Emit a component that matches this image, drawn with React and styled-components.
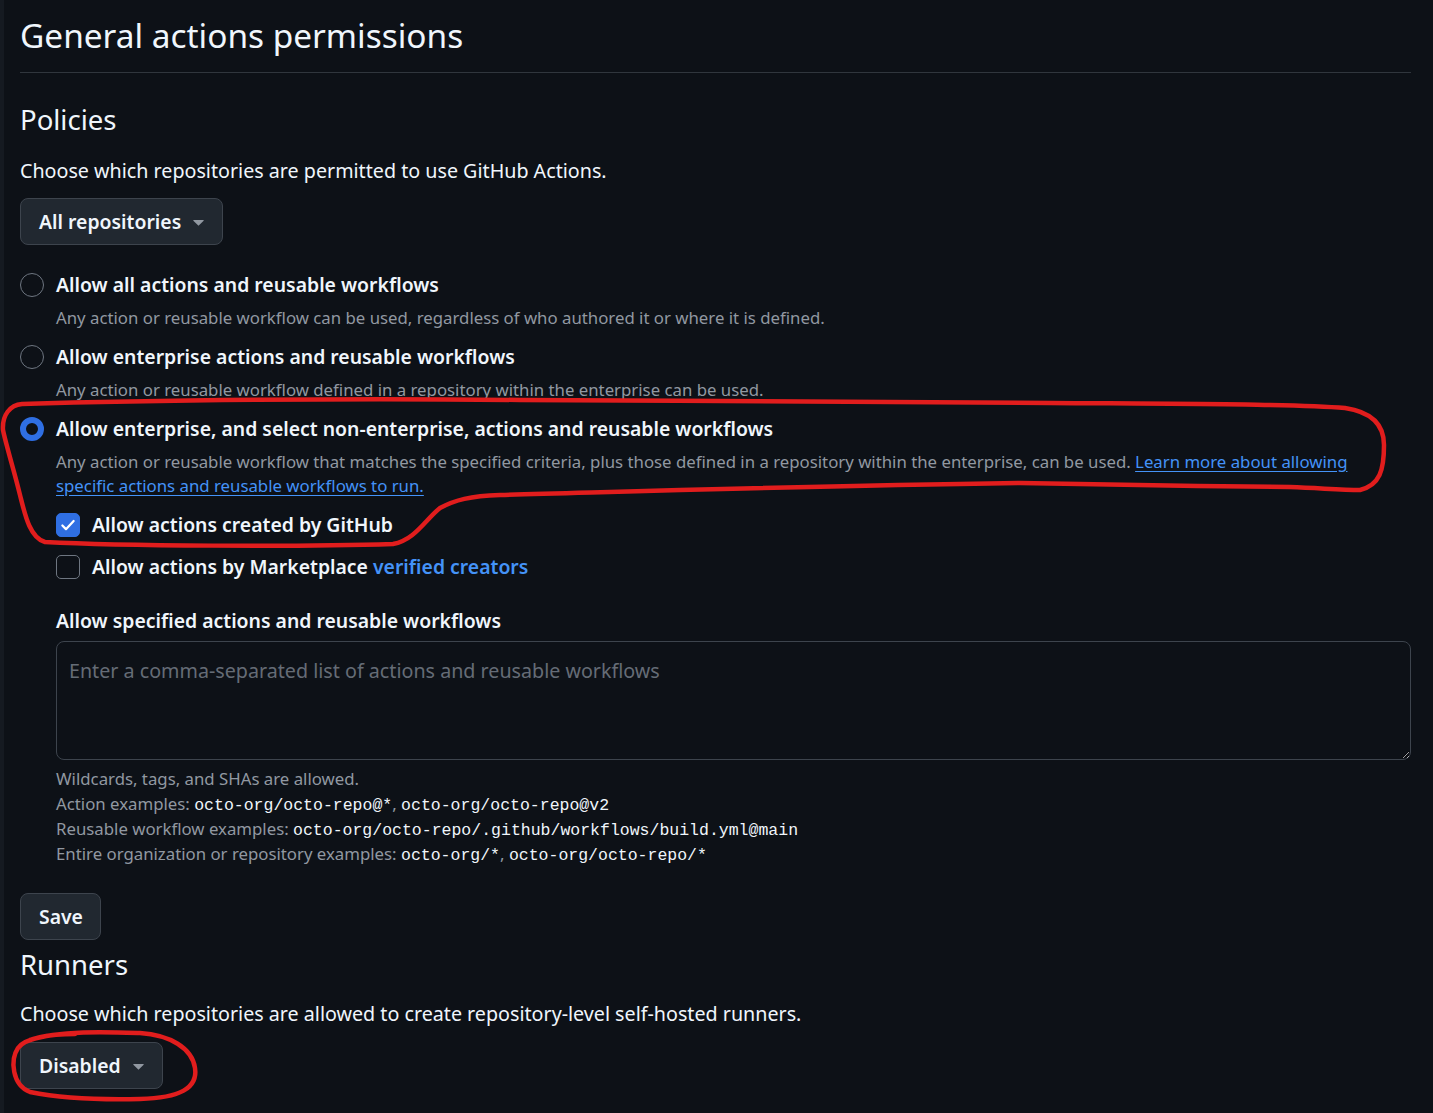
import React from 'react'
import styled, { createGlobalStyle } from 'styled-components'

const GlobalStyle = createGlobalStyle`
  html, body { margin: 0; padding: 0; background: #0d1117; }
  body {
    font-family: "Noto Sans", "Liberation Sans", sans-serif;
    color: #f0f6fc;
  }
  * { box-sizing: border-box; }
`

const Wrapper = styled.div`
  position: relative;
  width: 1433px;
  height: 1113px;
  overflow: hidden;
`

const Page = styled.div`
  width: 1433px;
  height: 1113px;
  border-left: 4px solid #151a21;
  padding: 10px 22px 0 16px;
`

const Header = styled.div`
  border-bottom: 1px solid #30363d;
  padding-bottom: 11px;
`

const Title = styled.h2`
  margin: 0;
  font-size: 33.4px;
  line-height: 51px;
  font-weight: 400;
`

const SectionTitle = styled.h3`
  margin: ${p => p.$top}px 0 0;
  font-size: 27.5px;
  line-height: 42px;
  font-weight: 400;
`

const Lead = styled.p`
  margin: ${p => p.$top}px 0 0;
  font-size: 19.7px;
  line-height: 30px;
`

const Button = styled.button`
  display: flex;
  align-items: center;
  gap: 6px;
  margin-top: ${p => p.$top}px;
  height: 47px;
  padding: 0 ${p => (p.$caret ? 12 : 17)}px 0 18px;
  background: #212830;
  border: 1px solid #3d444d;
  border-radius: 8px;
  color: #f0f6fc;
  font-family: inherit;
  font-size: 19.4px;
  font-weight: 600;
`

const Options = styled.div`
  margin-top: 25px;
  display: flex;
  flex-direction: column;
  gap: 12px;
`

const Option = styled.div`
  display: grid;
  grid-template-columns: 24px 1fr;
  column-gap: 12px;
  row-gap: 6px;
  align-items: center;
`

const Radio = styled.span`
  width: 24px;
  height: 24px;
  border-radius: 50%;
  border: ${p => (p.$checked ? '6.5px solid #2f6fe3' : '1.5px solid #6e7681')};
  background: #0d1117;
`

const OptionLabel = styled.div`
  font-size: 19.4px;
  line-height: 30px;
  font-weight: 600;
`

const Note = styled.div`
  grid-column: 2;
  padding-right: 10px;
  font-size: 16.8px;
  line-height: 24px;
  color: #9198a1;
`

const Link = styled.a`
  color: #4493f8;
  text-decoration: ${p => (p.$underline ? 'underline' : 'none')};
  text-underline-offset: 3px;
`

const Nested = styled.div`
  grid-column: 2;
  margin-top: 6px;
  display: flex;
  flex-direction: column;
  gap: 12px;
`

const CheckRow = styled.div`
  display: flex;
  align-items: center;
  gap: 12px;
  font-size: 19.4px;
  line-height: 30px;
  font-weight: 600;
`

const Box = styled.span`
  flex: none;
  width: 24px;
  height: 24px;
  border-radius: 5px;
  display: grid;
  place-items: center;
  background: ${p => (p.$checked ? '#2f6fe3' : '#0d1117')};
  border: 1.5px solid ${p => (p.$checked ? '#2f6fe3' : '#6e7681')};
`

const Field = styled.div`
  margin-top: 12px;
`

const FieldLabel = styled.div`
  font-size: 19.4px;
  line-height: 30px;
  font-weight: 600;
`

const TextArea = styled.textarea`
  display: block;
  margin-top: 5px;
  width: 100%;
  height: 119px;
  padding: 14px 12px;
  background: #0d1117;
  border: 1px solid #3d444d;
  border-radius: 8px;
  color: #f0f6fc;
  font-family: inherit;
  font-size: 19.7px;
  line-height: 30px;
  resize: vertical;
  outline: none;
  &::placeholder { color: #656c76; }
`

const Help = styled.div`
  margin-top: 6px;
  font-size: 16.8px;
  line-height: 25px;
  color: #9198a1;
`

const Code = styled.code`
  font-family: "Liberation Mono", "DejaVu Sans Mono", monospace;
  font-size: 16.5px;
  line-height: 1;
  color: #f0f6fc;
`

const Overlay = styled.svg`
  position: absolute;
  top: 0;
  left: 0;
  pointer-events: none;
`

const Caret = () => (
  <svg width="23" height="23" viewBox="0 0 16 16" fill="#9198a1">
    <path d="m4.427 7.427 3.396 3.396a.25.25 0 0 0 .354 0l3.396-3.396A.25.25 0 0 0 11.396 7H4.604a.25.25 0 0 0-.177.427Z" />
  </svg>
)

const Check = () => (
  <svg width="18" height="18" viewBox="0 0 16 16" fill="none" stroke="#fff" strokeWidth="2" strokeLinecap="round" strokeLinejoin="round">
    <path d="M3 8.5l3.2 3.2L13 4.5" />
  </svg>
)

export default function App() {
  return (
    <Wrapper>
      <GlobalStyle />
      <Page>
        <Header>
          <Title>General actions permissions</Title>
        </Header>

        <SectionTitle $top={26}>Policies</SectionTitle>
        <Lead $top={15}>Choose which repositories are permitted to use GitHub Actions.</Lead>
        <Button $top={12} $caret>All repositories <Caret /></Button>

        <Options>
          <Option>
            <Radio />
            <OptionLabel>Allow all actions and reusable workflows</OptionLabel>
            <Note>Any action or reusable workflow can be used, regardless of who authored it or where it is defined.</Note>
          </Option>
          <Option>
            <Radio />
            <OptionLabel>Allow enterprise actions and reusable workflows</OptionLabel>
            <Note>Any action or reusable workflow defined in a repository within the enterprise can be used.</Note>
          </Option>
          <Option>
            <Radio $checked />
            <OptionLabel>Allow enterprise, and select non-enterprise, actions and reusable workflows</OptionLabel>
            <Note>
              Any action or reusable workflow that matches the specified criteria, plus those defined in a repository within the enterprise, can be used.{' '}
              <Link $underline href="#">Learn more about allowing specific actions and reusable workflows to run.</Link>
            </Note>
            <Nested>
              <CheckRow>
                <Box $checked><Check /></Box>
                Allow actions created by GitHub
              </CheckRow>
              <CheckRow>
                <Box />
                <span>Allow actions by Marketplace <Link href="#">verified creators</Link></span>
              </CheckRow>
              <Field>
                <FieldLabel>Allow specified actions and reusable workflows</FieldLabel>
                <TextArea placeholder="Enter a comma-separated list of actions and reusable workflows" />
                <Help>
                  <div>Wildcards, tags, and SHAs are allowed.</div>
                  <div>Action examples: <Code>octo-org/octo-repo@*</Code>, <Code>octo-org/octo-repo@v2</Code></div>
                  <div>Reusable workflow examples: <Code>octo-org/octo-repo/.github/workflows/build.yml@main</Code></div>
                  <div>Entire organization or repository examples: <Code>octo-org/*</Code>, <Code>octo-org/octo-repo/*</Code></div>
                </Help>
              </Field>
            </Nested>
          </Option>
        </Options>

        <Button $top={27}>Save</Button>
        <SectionTitle $top={4}>Runners</SectionTitle>
        <Lead $top={13}>Choose which repositories are allowed to create repository-level self-hosted runners.</Lead>
        <Button $top={13} $caret>Disabled <Caret /></Button>
      </Page>

      <Overlay width="1433" height="1113" viewBox="0 0 1433 1113" fill="none" stroke="#e11d1d" strokeWidth="4.5" strokeLinecap="round" strokeLinejoin="round">
        <path d="M22 404 C150 400 350 398 520 400 C700 401 900 402 1050 403 C1200 404 1300 404 1345 408 C1372 412 1384 425 1384 445 C1384 470 1380 485 1360 490 C1340 490 1320 488 1290 487 C1200 486 1100 485 1020 483 C800 486 650 491 500 495 C470 496 455 500 440 508 C425 520 415 540 393 544 C300 547 120 546 45 542 C30 538 25 515 20 495 C14 470 6 445 3 430 C2 415 10 405 22 404" />
        <path d="M30 1040 C60 1030 110 1032 140 1033 C170 1035 192 1048 195 1068 C198 1088 180 1098 140 1099 C100 1100 60 1098 30 1092 C12 1085 10 1060 18 1048 C25 1038 50 1034 75 1034" />
      </Overlay>
    </Wrapper>
  )
}
